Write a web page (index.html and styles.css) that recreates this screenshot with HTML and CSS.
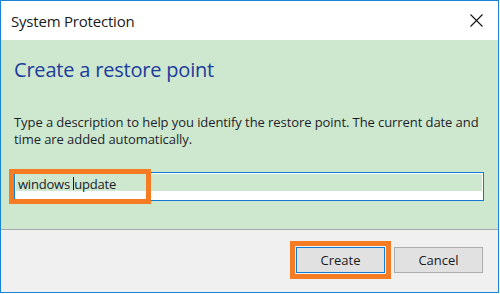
FILE: index.html
```html
<!DOCTYPE html>
<html lang="en">
<head>
<meta charset="utf-8">
<title>System Protection</title>
<link rel="stylesheet" href="styles.css">
</head>
<body>
<div class="window">
  <div class="titlebar">
    <span class="title">System Protection</span>
    <span class="close" aria-label="Close">
      <svg width="13" height="13" viewBox="0 0 13 13"><path d="M0.5 0.5 L12.5 12.5 M12.5 0.5 L0.5 12.5" stroke="#111" stroke-width="1.1" fill="none"/></svg>
    </span>
  </div>
  <div class="content">
    <h1 class="heading">Create a restore point</h1>
    <p class="desc">Type a description to help you identify the restore point. The current date and<br>time are added automatically.</p>
    <div class="field">
      <div class="input"><span class="typed">windows </span><span class="caret"></span><span class="typed">update</span></div>
      <div class="highlight"></div>
    </div>
  </div>
  <div class="footer">
    <button class="btn btn-default">Create</button>
    <button class="btn">Cancel</button>
  </div>
</div>
</body>
</html>
```
FILE: styles.css
```css
html, body {
  margin: 0;
  padding: 0;
  background: #ffffff;
}
body {
  font-family: "Open Sans", "Noto Sans", sans-serif;
  color: #1b1b1b;
}
.window {
  width: 499px;
  height: 293px;
  box-sizing: border-box;
  border: 1px solid #1883d7;
  display: flex;
  flex-direction: column;
}
.titlebar {
  height: 39px;
  flex: none;
  background: #ffffff;
  display: flex;
  align-items: center;
  justify-content: space-between;
  padding: 0 15px 0 10px;
}
.title {
  font-size: 15px;
  color: #1a1a1a;
  letter-spacing: -0.2px;
  margin-top: 1px;
}
.close {
  display: flex;
  width: 13px;
  height: 13px;
}
.content {
  background: #cde8cf;
  height: 189px;
  flex: none;
  padding: 0 14px 0 13px;
  box-sizing: border-box;
}
.heading {
  margin: 0;
  padding-top: 16px;
  font-weight: normal;
  font-size: 20px;
  line-height: 28px;
  color: #1c3b9c;
  letter-spacing: -0.2px;
}
.desc {
  margin: 30px 0 0 0;
  font-size: 13px;
  line-height: 17px;
  white-space: nowrap;
  color: #1f1f2a;
  letter-spacing: -0.08px;
}
.field {
  position: relative;
  margin-top: 24px;
}
.input {
  height: 29px;
  box-sizing: border-box;
  border: 1px solid #0f7ad6;
  background: linear-gradient(#cde8cf 0, #cde8cf 18px, #ffffff 18px);
  box-shadow: inset 0 0 0 1px #ffffff;
  display: flex;
  align-items: flex-start;
  padding: 3px 0 0 3px;
  font-size: 13px;
  line-height: 17px;
  color: #1a1a2a;
  white-space: pre;
  letter-spacing: -0.2px;
}
.caret {
  width: 1px;
  height: 13px;
  margin-top: 1px;
  background: #1a1a2a;
}
.highlight {
  position: absolute;
  left: -5px;
  top: -3px;
  width: 132px;
  height: 25px;
  border: 5px solid #f57c22;
}
.footer {
  flex: 1;
  background: #f0f0f0;
  border-top: 1px solid #a9a6ae;
  display: flex;
  justify-content: flex-end;
  align-items: flex-start;
  gap: 9px;
  padding: 17px 15px 0 0;
}
.btn {
  width: 89px;
  height: 26px;
  box-sizing: border-box;
  background: #e1e1e1;
  border: 1px solid #adadad;
  font-family: "Open Sans", "Noto Sans", sans-serif;
  font-size: 13px;
  color: #1a1a1a;
  padding: 0 0 1px 0;
}
.btn-default {
  border-color: #0f7ad6;
  outline: 5px solid #f57c22;
  outline-offset: 1px;
}
```
